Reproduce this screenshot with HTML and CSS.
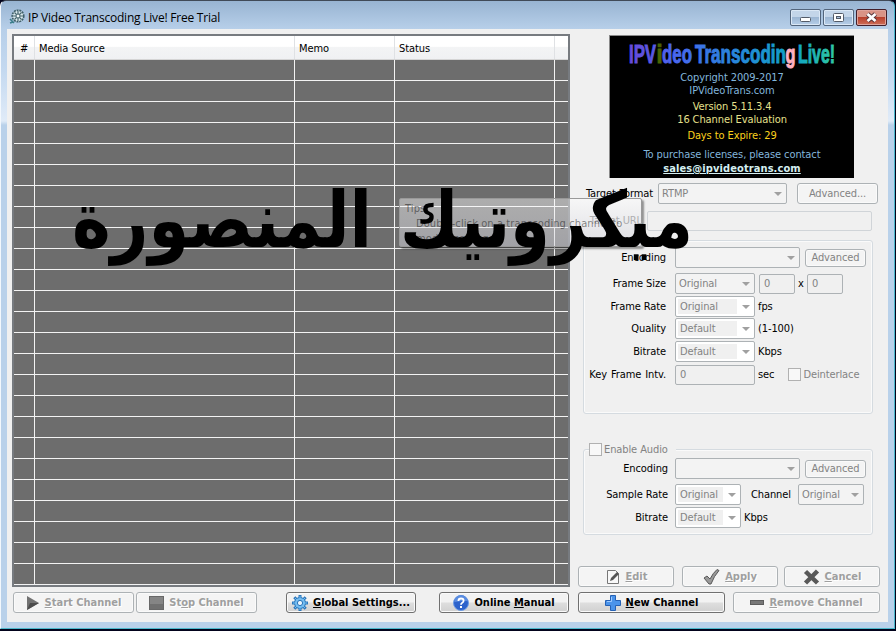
FILE: index.html
```
<!DOCTYPE html>
<html lang="en">
<head>
  <meta charset="UTF-8" />
  <title>IP Video Transcoding Live! Free Trial</title>
  <link rel="stylesheet" href="styles.css">
</head>
<body>
  <div id="window">
    <div id="title-bar">
      <svg class="app-icon" width="16" height="16" viewBox="0 0 16 16">
        <circle cx="9" cy="7" r="5.8" fill="#dcebee" stroke="#3f5f69" stroke-width="1.6" stroke-dasharray="2 .8"/>
        <path d="M9 2v10M4 7h10M5.5 3.5l7 7M12.500 3.500l-7 7" stroke="#45656e" stroke-width="1.200"/>
        <circle cx="9" cy="7" r="2" fill="#f5fafa" stroke="#45656e"/>
        <path d="M1 10l4 4M1 14l3-1" stroke="#3c7f8c" stroke-width="1.600"/>
      </svg>
      <h1>IP Video Transcoding Live! Free Trial</h1>
      <div class="window-buttons">
        <button class="win-btn" title="Minimize"><svg width="13" height="13"><rect x="1.500" y="6.500" width="10" height="4" rx="1" fill="#fff" stroke="#535b68"/></svg></button>
        <button class="win-btn" title="Maximize"><svg width="13" height="13"><rect x="1.500" y="2.500" width="10" height="8" rx="1" fill="#fff" stroke="#535b68"/><rect x="4.500" y="5.500" width="4" height="2" fill="#a9c0dc" stroke="#535b68"/></svg></button>
        <button class="win-btn close" title="Close"><svg width="13" height="13"><path d="M2.500 3l8 7M10.500 3l-8 7" stroke="#54343a" stroke-width="4.600"/><path d="M2.500 3l8 7M10.500 3l-8 7" stroke="#fff" stroke-width="2.800"/></svg></button>
      </div>
    </div>

    <div id="client">
      <div id="left-pane">
        <div id="channel-list">
          <div class="list-row list-head"><span>#</span><span>Media Source</span><span>Memo</span><span>Status</span></div>
          <div id="list-body"></div>
        </div>
        <div class="button-row">
          <button class="btn bold off start"><svg width="14" height="14"><path d="M1 0l12 7-12 7z" fill="#727272"/><path d="M1 14l12-7H4z" fill="#4c4c4c"/></svg><span><u>S</u>tart Channel</span></button>
          <button class="btn bold off stop"><svg width="15" height="14"><rect x=".5" y=".5" width="14" height="13" fill="#858585" stroke="#686868"/><path d="M1 8h13v5H1z" fill="#707070"/></svg><span>St<u>o</u>p Channel</span></button>
          <button class="btn bold global"><svg width="16" height="16" viewBox="0 0 16 16"><path d="M8 0v16M0 8h16M2.300 2.300l11.400 11.400M13.700 2.300L2.300 13.700" stroke="#2d78bd" stroke-width="3"/><circle cx="8" cy="8" r="5.500" fill="#75bdf0" stroke="#2874ba"/><path d="M8 1v14M1 8h14M3 3l10 10M13 3L3 13" stroke="#75bdf0"/><circle cx="8" cy="8" r="2.600" fill="#eef6fc" stroke="#2874ba"/></svg><span><u>G</u>lobal Settings...</span></button>
          <button class="btn bold manual"><svg width="16" height="16" viewBox="0 0 16 16"><circle cx="8" cy="8" r="7.500" fill="#2c62cb" stroke="#6b9be5"/><path d="M1.500 7a6.500 6.500 0 0 1 13-1q-6 0-13 1z" fill="#5a8ce0"/><path d="M5.400 6q0-2.500 2.600-2.500t2.600 2.200q0 1.300-1.300 2T8 9.700" fill="none" stroke="#fff" stroke-width="1.800"/><rect x="7" y="11" width="2" height="2" fill="#fff"/></svg><span>Online <u>M</u>anual</span></button>
        </div>
      </div>

      <div id="right-pane">
        <div id="banner">
          <svg class="logo" width="208" height="28" viewBox="0 0 208 28">
            <defs>
              <linearGradient id="logo-fill" gradientUnits="userSpaceOnUse" x1="0" y1="0" x2="208" y2="0">
                <stop offset="0" stop-color="#6a48d8"/><stop offset=".22" stop-color="#4a66f0"/><stop offset=".55" stop-color="#248ad8"/><stop offset=".8" stop-color="#10a4c4"/><stop offset="1" stop-color="#30c8a0"/>
              </linearGradient>
            </defs>
            <text x="1" y="20.500" fill="url(#logo-fill)" stroke="url(#logo-fill)" textLength="27" lengthAdjust="spacingAndGlyphs">IPV</text>
            <text x="28.500" y="20.500" fill="#4a6404" stroke="#4a6404" textLength="6" lengthAdjust="spacingAndGlyphs">i</text>
            <text x="34" y="20.500" fill="url(#logo-fill)" stroke="url(#logo-fill)" textLength="30" lengthAdjust="spacingAndGlyphs">deo</text>
            <text x="67" y="20.500" fill="url(#logo-fill)" stroke="url(#logo-fill)" textLength="91" lengthAdjust="spacingAndGlyphs">Transcodin</text>
            <text x="157.500" y="20.500" fill="#ffb0c0" stroke="#ffb0c0" textLength="10" lengthAdjust="spacingAndGlyphs">g</text>
            <text x="170" y="20.500" fill="url(#logo-fill)" stroke="url(#logo-fill)" textLength="37" lengthAdjust="spacingAndGlyphs">Live!</text>
          </svg>
          <p class="blue">Copyright 2009-2017</p>
          <p class="blue">IPVideoTrans.com</p>
          <p class="cream">Version 5.11.3.4</p>
          <p class="cream tight">16 Channel Evaluation</p>
          <p class="gold">Days to Expire: 29</p>
          <p class="blue contact">To purchase licenses, please contact</p>
          <a>sales@ipvideotrans.com</a>
        </div>

        <div class="row format-row">
          <label>Target Format</label>
          <div class="combo w129">RTMP</div>
          <button class="btn off wide">Advanced...</button>
        </div>
        <div class="row url-row">
          <label>Target URL</label>
          <div class="field url"></div>
        </div>

        <div class="group video">
          <div class="row encoding"><label>Encoding</label><div class="combo w125"></div><button class="btn off adv">Advanced</button></div>
          <div class="row size"><label>Frame Size</label><div class="combo w80">Original</div><div class="field w36">0</div><span class="times">x</span><div class="field w36">0</div></div>
          <div class="row rate"><label>Frame Rate</label><div class="combo w80 edit"><span>Original</span></div><span class="unit">fps</span></div>
          <div class="row quality"><label>Quality</label><div class="combo w80 edit"><span>Default</span></div><span class="unit">(1-100)</span></div>
          <div class="row bitrate"><label>Bitrate</label><div class="combo w80 edit"><span>Default</span></div><span class="unit">Kbps</span></div>
          <div class="row key"><label>Key Frame Intv.</label><div class="field w80">0</div><span class="unit">sec</span><span class="check deinterlace"><i></i>Deinterlace</span></div>
        </div>

        <div class="group audio">
          <span class="check legend"><i></i>Enable Audio</span>
          <div class="row encoding"><label>Encoding</label><div class="combo w125"></div><button class="btn off adv">Advanced</button></div>
          <div class="row sample"><label>Sample Rate</label><div class="combo w66 edit"><span>Original</span></div><span class="channel">Channel</span><div class="combo w66">Original</div></div>
          <div class="row audio-bitrate"><label>Bitrate</label><div class="combo w66 edit"><span>Default</span></div><span class="unit">Kbps</span></div>
        </div>

        <div class="button-row actions">
          <button class="btn bold off"><svg width="16" height="16" viewBox="0 0 16 16"><path d="M2.500 1.500h8l3 3v10h-11z" fill="#f8f8f8" stroke="#777"/><path d="M5 12l1-3 6-6 2 2-6 6z" fill="#555"/></svg><span><u>E</u>dit</span></button>
          <button class="btn bold off"><svg width="17" height="16" viewBox="0 0 17 16"><path d="M1 9l3-2 3 3q3-6 7-9.500l2 1Q11 7 8 15H6z" fill="#999" stroke="#595959"/></svg><span><u>A</u>pply</span></button>
          <button class="btn bold off"><svg width="17" height="16" viewBox="0 0 17 16"><path d="M2.500 2.500l12 11.500M14.500 2l-12 12" stroke="#595959" stroke-width="4.500"/></svg><span><u>C</u>ancel</span></button>
        </div>
        <div class="button-row channels">
          <button class="btn bold"><svg width="16" height="16" viewBox="0 0 16 16"><path d="M5.500.5h5v5h5v5h-5v5h-5v-5h-5v-5h5z" fill="#4a93ea" stroke="#2561b4"/><path d="M6.500 2v4.500H2" stroke="#9fcbff" fill="none"/></svg><span><u>N</u>ew Channel</span></button>
          <button class="btn bold off"><svg width="14" height="16" viewBox="0 0 14 16"><rect x=".5" y="5.500" width="13" height="4" fill="#777" stroke="#5c5c5c"/></svg><span><u>R</u>emove Channel</span></button>
        </div>
      </div>
    </div>

    <div id="tooltip">
      <span>Tips:</span>
      <span class="indent">Double-click on a transcoding channel to</span>
      <span class="indent">modify settings.</span>
    </div>
    <svg id="watermark" width="640" height="120" viewBox="60 175 640 120" direction="rtl">
      <text x="693" y="247" textLength="293" lengthAdjust="spacingAndGlyphs">ميكروتيك</text>
      <text x="372" y="247" textLength="300" lengthAdjust="spacingAndGlyphs">المنصورة</text>
    </svg>
  </div>

  <script>
    const body = document.getElementById('list-body');
    for (let i = 0; i < 25; i++) {
      const row = document.createElement('div');
      row.className = 'list-row';
      row.innerHTML = '<span></span><span></span><span></span><span></span>';
      body.appendChild(row);
    }
  </script>
</body>
</html>
```
FILE: styles.css
```
* {
  box-sizing: border-box;
}

body {
  margin: 0;
  width: 896px;
  height: 631px;
  overflow: hidden;
  background: #02031c;
  font: 11px/13px 'DejaVu Sans Condensed', 'DejaVu Sans', sans-serif;
  font-stretch: condensed;
  letter-spacing: -0.1px;
  color: #000;
}

#window {
  position: relative;
  width: 895px;
  height: 629px;
  padding: 0 6px 6px 6px;
  border: 1px solid #4bb8cc;
  border-top-color: #404a58;
  border-left-color: #f3f8fd;
  border-radius: 6px 6px 0 0;
  background: linear-gradient(#98b4d2 0, #b7cfe9 28px, #c4d9f0 70px, #e0ebf8 120px, #b9d1ea 124px);
}

#title-bar {
  display: flex;
  height: 28px;
  padding-left: 2px;
}

.app-icon {
  margin-top: 8px;
}

h1 {
  flex: 1;
  margin: 9px 0 0 3px;
  font: 12px/16px 'Open Sans', 'Noto Sans', sans-serif;
  letter-spacing: -0.22px;
}

.window-buttons {
  display: flex;
  gap: 2px;
  margin: 8px 1px 0 0;
}

.win-btn {
  display: flex;
  align-items: center;
  justify-content: center;
  width: 31px;
  height: 17px;
  padding: 0;
  border: 1px solid #53657c;
  border-radius: 2px;
  box-shadow: inset 0 0 0 1px #dbe8f6;
  background: linear-gradient(#c3d5e9 45%, #9cb6d3 50%, #b7cfe9);
}

.win-btn.close {
  border-color: #431f2a;
  box-shadow: inset 0 0 0 1px #dfa49c;
  background: linear-gradient(#d99386 45%, #b9402d 50%, #ce6f59);
}

#client {
  display: flex;
  height: 593px;
  background: #f0f0f0;
}

#left-pane {
  width: 563px;
  padding: 5px 0 0 5px;
}

#channel-list {
  width: 558px;
  height: 553px;
  border: 2px solid #777b80;
  background: #6d6d6d;
}

.list-row {
  display: grid;
  grid-template-columns: 21px 260px 100px 160px;
  height: 21px;
  border-bottom: 1px solid #f3f3f3;
}

.list-row span {
  border-right: 1px solid #f3f3f3;
}

.list-head {
  height: 24px;
  border-bottom: 1px solid #d5d5d5;
  background: linear-gradient(#fff 45%, #f3f4f5 50%, #f0f1f3);
}

.list-head span {
  padding: 6px 0 0 4px;
  border-color: #dfe1e4;
}

.list-head span:first-child {
  padding-left: 6px;
}

.button-row {
  display: flex;
}

#left-pane .button-row {
  margin: 5px 0 0 1px;
}

.btn {
  display: flex;
  align-items: center;
  justify-content: center;
  gap: 5px;
  height: 21px;
  padding: 0;
  border: 1px solid #707070;
  border-radius: 3px;
  box-shadow: inset 0 0 0 1px #fafafa;
  background: linear-gradient(#f2f2f2 45%, #ddd 55%, #d0d0d0);
  font: inherit;
  letter-spacing: inherit;
  color: #000;
}

.btn.off {
  border-color: #adb2b5;
  background: #f4f4f4;
  color: #838383;
}

.btn.bold {
  font-weight: bold;
  letter-spacing: 0;
}

.btn.bold.off {
  color: #9f9f9f;
  text-shadow: 1px 1px #fff;
}

.btn svg {
  flex: none;
}

.start { width: 121px; }
.stop { width: 121px; margin-left: 2px; }
.global { width: 130px; margin-left: 29px; }
.manual { width: 130px; margin-left: 23px; }

#right-pane {
  width: 318px;
  padding: 6px 0 0 8px;
}

#banner {
  display: flex;
  flex-direction: column;
  align-items: center;
  width: 245px;
  height: 143px;
  margin-left: 31px;
  padding-top: 6px;
  border-top: 1px solid #8a8a8a;
  border-left: 1px solid #8a8a8a;
  background: #000;
}

.logo {
  flex: none;
  margin-bottom: 1px;
}

.logo text {
  font: bold 26px 'Liberation Sans Narrow', 'Liberation Sans', sans-serif;
  letter-spacing: 0;
  stroke-width: 1px;
}

#banner p {
  margin: 0;
}

#banner .blue { color: #83b6dc; }
#banner .cream { color: #e6e08c; margin-top: 3px; }
#banner .tight { margin-top: 0; }
#banner .gold { color: #fbd11d; margin-top: 3px; }
#banner .contact { margin-top: 6px; }

#banner a {
  font-weight: bold;
  letter-spacing: 0.1px;
  color: #d4eef0;
  text-decoration: underline;
  margin-top: 1px;
}

.row {
  display: flex;
  align-items: center;
  height: 21px;
}

.row label {
  width: 82px;
  margin-right: 9px;
  text-align: right;
  white-space: nowrap;
}

.audio .row label {
  width: 84px;
  margin-right: 7px;
}

.combo,
.field {
  position: relative;
  display: flex;
  align-items: center;
  height: 21px;
  padding-left: 3px;
  border: 1px solid #adb2b5;
  border-radius: 2px;
  background: #f3f3f3;
  color: #838383;
}

.combo::after {
  content: '';
  position: absolute;
  right: 4px;
  top: 8px;
  border: 4px solid transparent;
  border-top-color: #a0a0a0;
  border-bottom: 0;
}

.combo.edit {
  padding-left: 2px;
  background: #fff;
}

.combo.edit span {
  width: calc(100% - 17px);
  height: 15px;
  padding: 0 2px;
  background: #f0f0f0;
  line-height: 15px;
}

.field {
  height: 20px;
  padding-left: 4px;
  background: #f0f0f0;
}

.w129 { width: 129px; }
.w125 { width: 125px; }
.w80 { width: 80px; }
.w66 { width: 66px; }
.w36 { width: 36px; }

.format-row {
  margin-top: 5px;
}

.row.format-row label {
  width: 75px;
  margin-right: 5px;
}

.wide {
  width: 81px;
  margin-left: 10px;
}

.url-row {
  margin-top: 6px;
}

.row.url-row label {
  width: 64px;
  margin-right: 5px;
  color: #777;
}

.url {
  width: 225px;
  border-color: #d0d4d8;
}

.group {
  position: relative;
  width: 290px;
  margin-left: 5px;
  border: 1px solid #d5dbe0;
  border-radius: 3px;
  box-shadow: inset 0 0 0 1px #fafafa;
}

.video {
  height: 174px;
  margin-top: 9px;
  padding-top: 6px;
}

.adv {
  width: 61px;
  height: 18px;
  margin-left: 5px;
}

.size { margin-top: 5px; }
.size .field { margin-left: 4px; }
.times { width: 9px; margin-left: 3px; }
.size .times + .field { margin-left: 0; }
.rate { margin-top: 2px; }
.quality { margin-top: 1px; }
.bitrate { margin-top: 2px; }
.key { margin-top: 2px; }
.key label { word-spacing: 1px; }
.unit { margin-left: 3px; }

.check {
  display: flex;
  align-items: center;
  gap: 2px;
  color: #838383;
}

.check i {
  width: 13px;
  height: 13px;
  border: 1px solid #b1b1b1;
  background: #f8f8f8;
}

.deinterlace {
  margin-left: 14px;
}

.audio {
  height: 86px;
  margin-top: 35px;
  padding-top: 8px;
}

.legend {
  position: absolute;
  left: 5px;
  top: -7px;
  padding-right: 8px;
  background: #f0f0f0;
}

.sample { margin-top: 5px; }
.audio-bitrate { margin-top: 2px; }
.channel { width: 47px; margin-left: 10px; }

.actions {
  gap: 8px;
  margin-top: 31px;
}

.actions .btn {
  width: 96px;
}

.actions .btn:last-child {
  margin-left: -2px;
}

.channels {
  gap: 8px;
  margin-top: 5px;
}

.channels .btn {
  width: 147px;
}

/* fading tip balloon, half transparent over the form */
#tooltip {
  position: absolute;
  left: 398px;
  top: 197px;
  display: flex;
  flex-direction: column;
  width: 243px;
  height: 49px;
  padding: 2px 5px;
  border: 1px solid #999;
  border-radius: 2px;
  box-shadow: 2px 2px 2px #0006;
  background: linear-gradient(#ffffff70, #d0d0d888);
  line-height: 15px;
  letter-spacing: 0.1px;
  color: #0007;
  white-space: nowrap;
}

#tooltip .indent {
  padding-left: 11px;
}

#watermark {
  position: absolute;
  left: 59px;
  top: 174px;
}

#watermark text {
  font: bold 78px 'DejaVu Sans', sans-serif;
  letter-spacing: 0;
}
```
